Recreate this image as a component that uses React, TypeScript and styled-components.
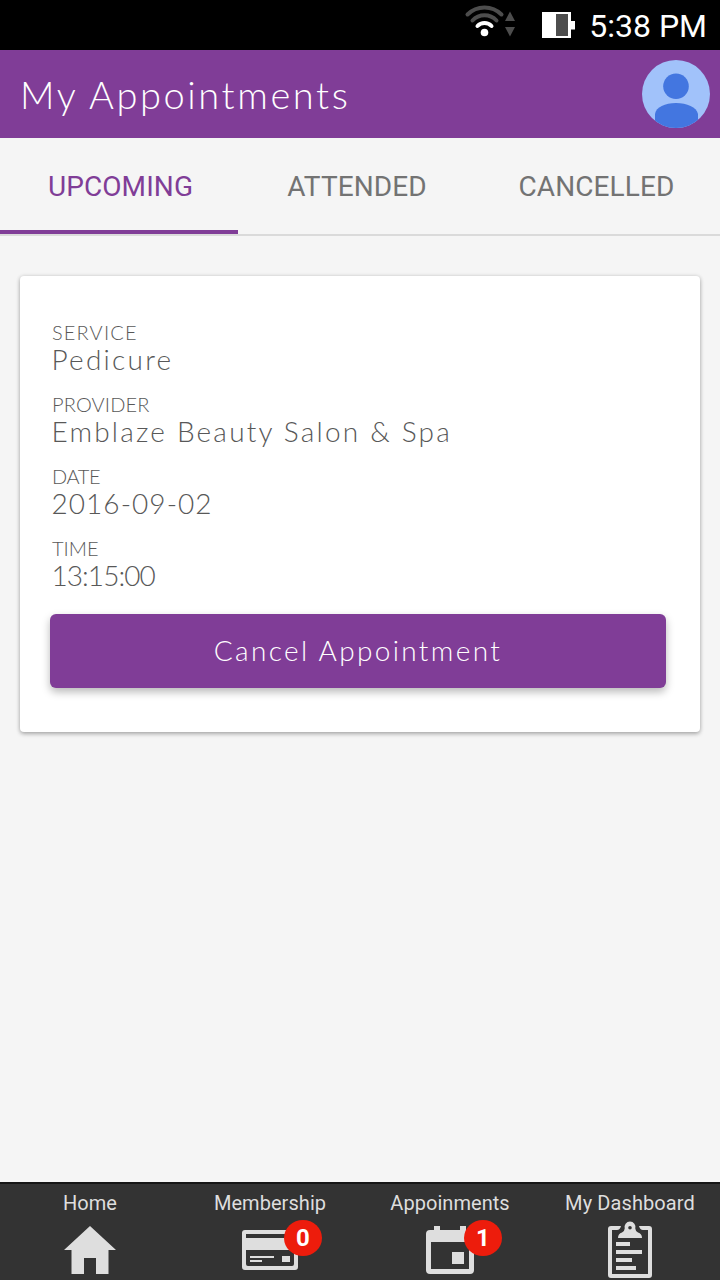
import React from "react";
import styled, { createGlobalStyle } from "styled-components";

const PURPLE = "#803d97";
const LIGHT = "#dedede";

const GlobalStyle = createGlobalStyle`
  *, *::before, *::after { box-sizing: border-box; }
  body { margin: 0; background: #f5f5f5; }
`;

const Screen = styled.div`
  display: flex;
  flex-direction: column;
  width: 720px;
  height: 1280px;
  overflow: hidden;
  background: #f5f5f5;
  font-family: Roboto, "Liberation Sans", sans-serif;
`;

const StatusBar = styled.div`
  display: flex;
  align-items: center;
  justify-content: flex-end;
  height: 50px;
  padding-right: 13px;
  background: #000;
`;

const StatusIcons = styled.svg`
  width: 120px;
  height: 50px;
  margin-right: 8px;
`;

const Clock = styled.span`
  width: 119px;
  font-size: 32px;
  line-height: 38px;
  padding-top: 1px;
  white-space: nowrap;
  text-align: right;
  color: #fff;
`;

const Header = styled.header`
  display: flex;
  align-items: center;
  justify-content: space-between;
  height: 88px;
  padding: 0 10px 0 20px;
  background: ${PURPLE};
`;

const Title = styled.h1`
  margin: 0;
  font: 300 38px/46px Lato, sans-serif;
  letter-spacing: 2.6px;
  color: #fff;
`;

const Avatar = styled.svg`
  width: 68px;
  height: 68px;
`;

const Tabs = styled.nav`
  display: flex;
  height: 98px;
  border-bottom: 2px solid #dadada;
`;

const Tab = styled.button<{ $active?: boolean; $inset?: number }>`
  width: 238px;
  padding: 6px 0 0 ${(p) => p.$inset ?? 3}px;
  border: 0;
  border-bottom: 4px solid ${(p) => (p.$active ? PURPLE : "transparent")};
  background: none;
  font: 400 28px/34px Roboto, sans-serif;
  letter-spacing: 0.1px;
  color: ${(p) => (p.$active ? PURPLE : "#737373")};
`;

const Content = styled.main`
  flex: 1;
  padding: 40px 20px;
`;

const Card = styled.section`
  height: 456px;
  padding: 45px 34px 44px 30px;
  border-radius: 4px;
  background: #fff;
  box-shadow: 0 2px 4px rgba(0, 0, 0, 0.28), 0 0 4px rgba(0, 0, 0, 0.12);
`;

const Fields = styled.dl`
  display: flex;
  flex-direction: column;
  gap: 18px;
  margin: 0 0 23px;
  font-family: Lato, sans-serif;
  font-weight: 300;
  color: #585858;
`;

const FieldName = styled.dt<{ $spacing: number }>`
  padding-left: 2px;
  font-size: 20px;
  line-height: 22px;
  letter-spacing: ${(p) => p.$spacing}px;
`;

const FieldValue = styled.dd<{ $spacing: number }>`
  margin: 0;
  padding-left: 1.5px;
  font-size: 28px;
  line-height: 32px;
  letter-spacing: ${(p) => p.$spacing}px;
`;

const CancelButton = styled.button`
  display: block;
  width: 100%;
  height: 74px;
  padding: 0 0 2px;
  border: 0;
  border-radius: 6px;
  background: ${PURPLE};
  box-shadow: 0 4px 8px rgba(0, 0, 0, 0.28);
  font: 300 28px/34px Lato, sans-serif;
  letter-spacing: 2.35px;
  color: #fff;
`;

const BottomNav = styled.nav`
  display: grid;
  grid-template-columns: repeat(4, 1fr);
  height: 98px;
  border-top: 2px solid #161616;
  background: #333;
`;

const NavItem = styled.a`
  display: flex;
  flex-direction: column;
  align-items: center;
  padding-top: 7px;
  color: ${LIGHT};
`;

const NavLabel = styled.span<{ $spacing?: number }>`
  height: 29px;
  font-size: 20px;
  line-height: 24px;
  letter-spacing: ${(p) => p.$spacing ?? 0}px;
`;

const IconBox = styled.span`
  position: relative;
  width: 60px;
  height: 60px;
`;

const NavIcon = styled.svg`
  display: block;
  width: 60px;
  height: 60px;
  fill: ${LIGHT};
`;

const Badge = styled.span`
  position: absolute;
  top: 0;
  left: 44px;
  width: 38px;
  height: 36px;
  border-radius: 50%;
  background: #ed1c0c;
  font-size: 24px;
  font-weight: 700;
  line-height: 36px;
  text-align: center;
  color: #fff;
`;

const fields = [
  { name: "SERVICE", nameSpacing: 1.15, value: "Pedicure", spacing: 2.25 },
  { name: "PROVIDER", nameSpacing: 0.15, value: "Emblaze Beauty Salon & Spa", spacing: 2.2 },
  { name: "DATE", nameSpacing: -0.4, value: "2016-09-02", spacing: 1.05 },
  { name: "TIME", nameSpacing: 0, value: "13:15:00", spacing: -0.95 },
];

const navItems = [
  {
    label: "Home",
    spacing: 0,
    icon: <path d="M30 6 56 30H48.500V54H36V38H24V54H11.500V30H4Z" />,
  },
  {
    label: "Membership",
    spacing: 0.05,
    badge: "0",
    icon: (
      <>
        <path
          fillRule="evenodd"
          d="M5 10H55Q58 10 58 13V47Q58 50 55 50H5Q2 50 2 47V13Q2 10 5 10ZM6 14V18H54V14ZM6 30V44Q6 46 8 46H52Q54 46 54 44V30Z"
        />
        <path d="M10 36H34V38H10ZM10 40H22V42H10ZM42 36H50V42H42Z" />
      </>
    ),
  },
  {
    label: "Appoinments",
    spacing: 0.05,
    badge: "1",
    icon: (
      <>
        <path
          fillRule="evenodd"
          d="M14 6H20V10H40V6H46V10H50Q54 10 54 14V50Q54 54 50 54H10Q6 54 6 50V14Q6 10 10 10H14ZM11 22V49H49V22Z"
        />
        <path d="M32 32H44V44H32Z" />
      </>
    ),
  },
  {
    label: "My Dashboard",
    spacing: 0.1,
    icon: (
      <>
        <path d="M11 6H21Q20 10 17 10H12V54H48V10H43Q40 10 39 6H49Q52 6 52 9V55Q52 58 49 58H11Q8 58 8 55V9Q8 6 11 6Z" />
        <path
          fillRule="evenodd"
          d="M18 18Q18 13.500 22 12.500Q24.500 11.500 24.700 8.500A5.500 5.500 0 1 1 35.300 8.500Q35.500 11.500 38 12.500Q42 13.500 42 18ZM30 6A1.800 1.800 0 1 0 30 9.600A1.800 1.800 0 1 0 30 6Z"
        />
        <path d="M16 22H30V26H16ZM16 30H42V34H16ZM16 38H32V42H16ZM16 46H36V50H16Z" />
      </>
    ),
  },
];

export default function App() {
  return (
    <>
      <GlobalStyle />
      <Screen>
        <StatusBar>
          <StatusIcons viewBox="460 0 120 50" fill="none">
            <g strokeWidth="4" strokeLinecap="round">
              <path d="M467.500 14.500A24 24 0 0 1 501.500 14.500" stroke="#4d4d4d" />
              <path d="M472.500 20.500A16.500 16.500 0 0 1 496.500 20.500" stroke="#4d4d4d" />
              <path d="M477.500 26A9.500 9.500 0 0 1 491.500 26" stroke="#fff" />
            </g>
            <circle cx="484.500" cy="32.500" r="3.800" fill="#fff" />
            <path d="M510 11.500 515 21H505ZM510 36.500 515 27H505Z" fill="#4d4d4d" />
            <path d="M542 12H571V21H575V29.500H571V38H542Z" fill="#fff" />
            <path d="M556 14H568V36H556Z" fill="#4d4d4d" />
          </StatusIcons>
          <Clock>5:38 PM</Clock>
        </StatusBar>

        <Header>
          <Title>My Appointments</Title>
          <Avatar viewBox="0 0 68 68">
            <defs>
              <clipPath id="avatar-clip">
                <circle cx="34" cy="34" r="34" />
              </clipPath>
            </defs>
            <g clipPath="url(#avatar-clip)">
              <path d="M0 0H68V68H0Z" fill="#a1c2fa" />
              <circle cx="34" cy="26.300" r="12.800" fill="#4376e0" />
              <path d="M13 68V54C14 47 23 43 34 43S54.500 47 56 54V68Z" fill="#4376e0" />
            </g>
          </Avatar>
        </Header>

        <Tabs>
          <Tab $active>UPCOMING</Tab>
          <Tab $inset={0}>ATTENDED</Tab>
          <Tab>CANCELLED</Tab>
        </Tabs>

        <Content>
          <Card>
            <Fields>
              {fields.map((f) => (
                <div key={f.name}>
                  <FieldName $spacing={f.nameSpacing}>{f.name}</FieldName>
                  <FieldValue $spacing={f.spacing}>{f.value}</FieldValue>
                </div>
              ))}
            </Fields>
            <CancelButton>Cancel Appointment</CancelButton>
          </Card>
        </Content>

        <BottomNav>
          {navItems.map((item) => (
            <NavItem key={item.label}>
              <NavLabel $spacing={item.spacing}>{item.label}</NavLabel>
              <IconBox>
                <NavIcon viewBox="0 0 60 60">{item.icon}</NavIcon>
                {item.badge && <Badge>{item.badge}</Badge>}
              </IconBox>
            </NavItem>
          ))}
        </BottomNav>
      </Screen>
    </>
  );
}
